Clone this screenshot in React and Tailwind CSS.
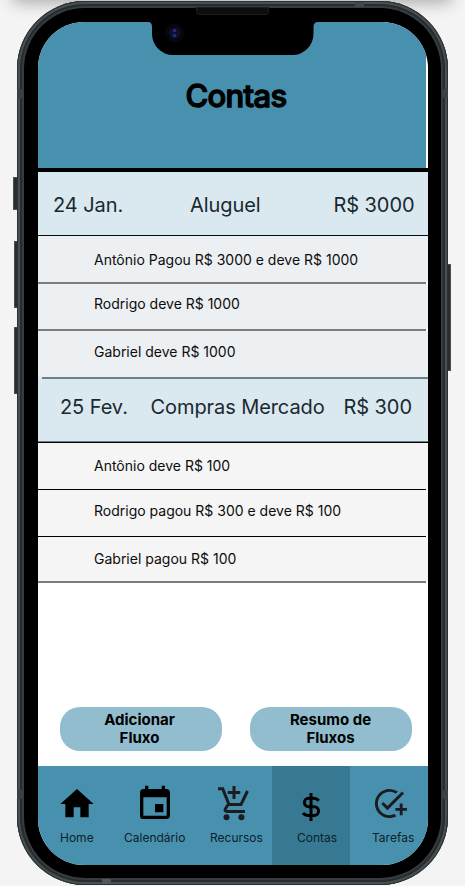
import { MdHome, MdEvent, MdAddTask } from "react-icons/md";

function Bill({ date, name, value, className }) {
  return (
    <div className={`flex bg-[#dae8ef] text-[20px] leading-[24px] tracking-[-0.08px] whitespace-nowrap text-[#1a282f] ${className}`}>
      {date}
      {name}
      {value}
    </div>
  );
}

function Entry({ children, className }) {
  return (
    <div className={`flex items-start pl-[56px] text-[14px] leading-[17px] whitespace-nowrap text-[#0c0c0c] ${className}`}>
      {children}
    </div>
  );
}

function Tab({ icon, label, cell = "", labelClass = "" }) {
  return (
    <div className={`flex h-full w-[78px] flex-col ${cell}`}>
      <div className="flex h-[64px] items-start">{icon}</div>
      <span className={`text-[12px] leading-[16px] whitespace-nowrap text-[#0e2028] ${labelClass}`}>{label}</span>
    </div>
  );
}

function CartIcon({ className }) {
  return (
    <svg className={className} width="32" height="36" viewBox="0 0 32 36" fill="none" stroke="#1d1b20" strokeWidth="3">
      <path d="M0 3.700H4.700L11 19.500H23L29.500 6" />
      <path d="M10.500 19L7.200 24.200Q6.500 26.500 9 26.500H27" />
      <path d="M16 1V14M9.700 7.500H22.300" />
      <circle cx="8.500" cy="32.300" r="3" fill="#1d1b20" stroke="none" />
      <circle cx="23.400" cy="32.300" r="3" fill="#1d1b20" stroke="none" />
    </svg>
  );
}

function DollarIcon({ className }) {
  return (
    <svg className={className} width="20" height="30" viewBox="0 0 20 30" fill="none" stroke="#000" strokeWidth="3">
      <path d="M10 1V29" />
      <path d="M17.800 8.700Q15.800 6.300 12.500 6.300H7.600A4.200 4.200 0 0 0 7.600 14.700H13.200A4.400 4.400 0 0 1 13.200 23.500H7.500Q4 23.500 2 21" />
    </svg>
  );
}

function Notch() {
  return (
    <svg className="absolute top-0 left-[110px]" width="170" height="34" viewBox="0 0 170 34">
      <path d="M0 0H170Q165.500 0 165.500 5V12A21 21 0 0 1 144.500 33H25A21 21 0 0 1 4 12V5Q4 0 0 0Z" fill="#000" />
      <circle cx="26.500" cy="11" r="9.500" fill="#06060b" />
      <circle cx="26.500" cy="11" r="5.500" fill="#0d1033" />
      <circle cx="26.500" cy="8.500" r="1.500" fill="#2d3580" />
      <circle cx="26.500" cy="13.500" r="1.500" fill="#2d3580" />
    </svg>
  );
}

const sideButton = "absolute border border-[#4a4f52] bg-[#282d30]";

export default function App() {
  return (
    <div className="relative h-[886px] w-[465px] overflow-hidden bg-[#f4f4f4] pl-[17px] font-['Inter',sans-serif]">
      <div className="absolute -top-[20px] left-[16px] h-[20px] w-[432px] shadow-[0_0_16px_3px_rgba(0,0,0,0.3)]" />
      <div className={`${sideButton} top-[177px] left-[13px] h-[33px] w-[6px]`} />
      <div className={`${sideButton} top-[241px] left-[14px] h-[67px] w-[5px]`} />
      <div className={`${sideButton} top-[327px] left-[14px] h-[67px] w-[5px]`} />
      <div className={`${sideButton} top-[264px] left-[446px] h-[107px] w-[5px]`} />

      <div className="relative mt-px h-[884px] w-[431px] rounded-[68px] bg-[#353c40] p-[7px] shadow-[inset_0_0_0_1px_#2c3234,inset_0_0_0_3px_#484f51,inset_0_0_0_5px_#262c2f]">
        <div className="h-[870px] w-[417px] rounded-[61px] bg-black p-[14px]">
          <div className="relative flex h-[843px] w-[390px] flex-col overflow-hidden rounded-[46px] bg-white">
            <div className="flex h-[146px] w-[388px] justify-center bg-[#4791ae] pt-[55px] pl-[8px]">
              <h1 className="text-[31px] leading-[38px] font-medium tracking-[-0.7px] text-black [-webkit-text-stroke:1.3px_black]">Contas</h1>
            </div>
            <div className="h-[4px] bg-black" />
            <Bill
              className="h-[63px] pt-[21px]"
              date={<span className="w-[137px] pl-[15px]">24 Jan.</span>}
              name={<span className="w-[143px] pl-[15px]">Aluguel</span>}
              value={<span className="pl-[15.5px]">R$ 3000</span>}
            />
            <div className="h-px bg-[#050c14]" />
            <Entry className="h-[46px] bg-[#ecf0f3] pt-[15px]">Antônio Pagou R$ 3000 e deve R$ 1000</Entry>
            <div className="h-[2px] w-[388px] bg-[#7b7d7e]" />
            <Entry className="h-[45px] bg-[#ecf0f3] pt-[11px]">Rodrigo deve R$ 1000</Entry>
            <div className="h-[2px] w-[388px] bg-[#7b7d7e]" />
            <Entry className="h-[46px] bg-[#ecf0f3] pt-[12px]">Gabriel deve R$ 1000</Entry>
            <div className="h-[2px] bg-[#dae8ef] pl-[4px]">
              <div className="h-full bg-[#6d8088]" />
            </div>
            <Bill
              className="h-[62px] pt-[16px]"
              date={<span className="w-[97px] pl-[22px]">25 Fev.</span>}
              name={<span className="w-[193px] pl-[15.5px]">Compras Mercado</span>}
              value={<span className="pl-[15.5px]">R$ 300</span>}
            />
            <div className="h-[2px] border-t border-[#6d8088] bg-black" />
            <Entry className="h-[46px] bg-[#f5f5f5] pt-[14px]">Antônio deve R$ 100</Entry>
            <div className="h-px w-[388px] bg-black" />
            <Entry className="h-[46px] bg-[#f5f5f5] pt-[12px]">Rodrigo pagou R$ 300 e deve R$ 100</Entry>
            <div className="h-px w-[388px] bg-black" />
            <Entry className="h-[44px] bg-[#f5f5f5] pt-[13px]">Gabriel pagou R$ 100</Entry>
            <div className="h-[2px] w-[388px] bg-[#7b7b7b]" />

            <div className="flex h-[183px] items-end gap-[28px] pb-[15px] pl-[22px] text-[15px] leading-[18px] font-bold">
              <button className="h-[44px] w-[162px] rounded-[20px] bg-[#91bdce] pr-[3px]">
                Adicionar
                <br />
                Fluxo
              </button>
              <button className="h-[44px] w-[162px] rounded-[20px] bg-[#91bdce] pr-[1px]">
                Resumo de
                <br />
                Fluxos
              </button>
            </div>

            <nav className="flex h-[99px] bg-[#4791ae]">
              <Tab label="Home" labelClass="pl-[22px]" icon={<MdHome className="mt-[18px] ml-[19px] size-[40px] text-black" />} />
              <Tab label="Calendário" labelClass="pl-[8px]" icon={<MdEvent className="mt-[18px] ml-[19px] size-[40px] text-black" />} />
              <Tab label="Recursos" labelClass="pl-[16px]" icon={<CartIcon className="mt-[19px] ml-[24px]" />} />
              <Tab label="Contas" cell="bg-[#377893]" labelClass="pl-[25px]" icon={<DollarIcon className="mt-[26px] ml-[29px]" />} />
              <Tab label="Tarefas" labelClass="pl-[22px]" icon={<MdAddTask preserveAspectRatio="none" className="mt-[20px] ml-[22px] h-[35px] w-[35px] text-[#1d1b20]" />} />
            </nav>
            <Notch />
          </div>
        </div>
        <div className="absolute top-[6px] left-[179px] h-[8px] w-[73px] rounded-b-[3px] border border-[#1c1c1c] bg-[#0e0e0e]" />
        <div className="absolute top-[88px] left-0 h-[9px] w-[6px] bg-[#3c3f47]" />
        <div className="absolute top-[88px] right-0 h-[9px] w-[6px] bg-[#3c3f47]" />
        <div className="absolute top-[789px] left-0 h-[9px] w-[6px] bg-[#3c3f47]" />
        <div className="absolute top-[789px] right-0 h-[9px] w-[6px] bg-[#3c3f47]" />
        <div className="absolute top-px left-[338px] h-[5px] w-[9px] bg-[#43454f]" />
        <div className="absolute bottom-px left-[85px] h-[5px] w-[9px] bg-[#54565a]" />
      </div>
    </div>
  );
}
